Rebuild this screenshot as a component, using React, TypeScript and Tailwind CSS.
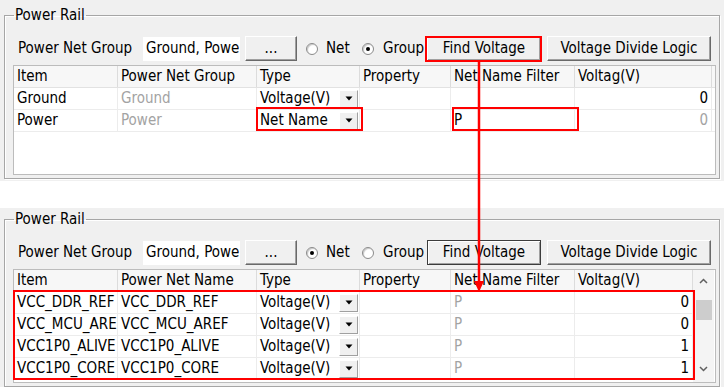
import React from 'react';

type Cell = { text?: string; gray?: boolean; dropdown?: boolean; right?: boolean };

const topHeaders = ['Item', 'Power Net Group', 'Type', 'Property', 'Net Name Filter', 'Voltag(V)'];
const bottomHeaders = ['Item', 'Power Net Name', 'Type', 'Property', 'Net Name Filter', 'Voltag(V)'];

const topCols = ['w-[104px]', 'w-[139px]', 'w-[103px]', 'w-[91px]', 'w-[124px]', 'w-[137px]'];
const bottomCols = ['w-[104px]', 'w-[139px]', 'w-[103px]', 'w-[91px]', 'w-[124px]', 'w-[118px]'];

const topRows: Cell[][] = [
  [{ text: 'Ground' }, { text: 'Ground', gray: true }, { text: 'Voltage(V)', dropdown: true }, {}, {}, { text: '0', right: true }],
  [{ text: 'Power' }, { text: 'Power', gray: true }, { text: 'Net Name', dropdown: true }, {}, { text: 'P' }, { text: '0', right: true, gray: true }],
];

const netNames = [
  ['VCC_DDR_REF', '0'],
  ['VCC_MCU_AREF', '0'],
  ['VCC1P0_ALIVE', '1'],
  ['VCC1P0_CORE', '1'],
];

const bottomRows: Cell[][] = netNames.map(([name, v]) => [
  { text: name },
  { text: name },
  { text: 'Voltage(V)', dropdown: true },
  {},
  { text: 'P', gray: true },
  { text: v, right: true },
]);

const Radio = ({ checked }: { checked?: boolean }) => (
  <span className="w-[12px] h-[12px] rounded-full border border-[#8a8a8a] bg-white flex items-center justify-center shadow-[inset_1px_1px_1px_#c8c8c8]">
    {checked && <span className="w-[4px] h-[4px] rounded-full bg-black" />}
  </span>
);

const WinButton = ({ children, className, focused }: { children: React.ReactNode; className: string; focused?: boolean }) => (
  <div
    className={`h-[25px] flex items-center justify-center bg-[#f0f0f0] ${
      focused
        ? 'border border-[#3c3c3c] shadow-[inset_1px_1px_0_#ffffff,inset_-1px_-1px_0_#a0a0a0]'
        : 'border border-t-[#ffffff] border-l-[#ffffff] border-b-[#696969] border-r-[#696969] shadow-[inset_-1px_-1px_0_#a0a0a0]'
    } ${className}`}
  >
    {children}
  </div>
);

const DropButton = () => (
  <div className="w-[19px] h-[18px] mr-[1px] bg-[#f0f0f0] border border-t-[#ffffff] border-l-[#ffffff] border-b-[#a0a0a0] border-r-[#a0a0a0] flex items-center justify-center">
    <svg width="8" height="5" viewBox="0 0 8 5">
      <path d="M0.5 0.5 L7.5 0.5 L4 4.5 Z" fill="#000" />
    </svg>
  </div>
);

const Row = ({ cells, cols }: { cells: Cell[]; cols: string[] }) => (
  <div className="flex h-[22px] border-b border-[#ececec]">
    {cells.map((c, i) => (
      <div
        key={i}
        className={`${cols[i]} shrink-0 h-full flex items-center overflow-hidden whitespace-nowrap border-r border-[#ececec] ${
          c.right ? 'justify-end pr-[3px]' : c.dropdown ? 'justify-between pl-[3px]' : 'pl-[3px]'
        } ${c.gray ? 'text-[#a3a3a3]' : 'text-black'}`}
      >
        <span>{c.text}</span>
        {c.dropdown && <DropButton />}
      </div>
    ))}
  </div>
);

const Header = ({ names, cols }: { names: string[]; cols: string[] }) => (
  <div className="flex h-[22px] bg-[#f7f7f7] border-b border-[#e2e2e2]">
    {names.map((n, i) => (
      <div key={i} className={`${cols[i]} shrink-0 h-full flex items-center pl-[3px] border-r border-[#dcdcdc] whitespace-nowrap overflow-hidden`}>
        {n}
      </div>
    ))}
  </div>
);

const Panel = ({ bottom }: { bottom?: boolean }) => (
  <div className={`bg-[#f0f0f0] px-[4px] overflow-hidden ${bottom ? 'h-[179px] pt-[3px]' : 'h-[181px] pt-[7px]'}`}>
    <fieldset className="border border-[#a6a6a6] shadow-[inset_1px_1px_0_#ffffff,1px_1px_0_#ffffff] px-0 pb-[3px] min-w-0">
      <legend className="ml-[9px] px-[1px] leading-[16px]">Power Rail</legend>
      <div className="pl-[8px] pr-[3px] mt-[13px]">
        {/* controls row */}
        <div className="flex items-center h-[25px]">
          <div className="w-[130px] pl-[5px] whitespace-nowrap">Power Net Group</div>
          <div className="w-[97px] h-[24px] bg-white pl-[3px] flex items-center overflow-hidden whitespace-nowrap">Ground, Power</div>
          <WinButton className="w-[52px] ml-[5px]">...</WinButton>
          <div className="w-[65px] pl-[9px] flex items-center gap-[8px]">
            <Radio checked={bottom} />
            <span>Net</span>
          </div>
          <div className="w-[65px] flex items-center gap-[9px]">
            <Radio checked={!bottom} />
            <span>Group</span>
          </div>
          <WinButton className="w-[114px]" focused={bottom}>Find Voltage</WinButton>
          <WinButton className="w-[164px] ml-[6px]">Voltage Divide Logic</WinButton>
        </div>

        {/* grid */}
        {bottom ? (
          <div className="mt-[4px] h-[114px] bg-white border border-[#bcbcbc] flex overflow-hidden">
            <div className="w-[679px] shrink-0">
              <Header names={bottomHeaders} cols={bottomCols} />
              {bottomRows.map((r, i) => (
                <Row key={i} cells={r} cols={bottomCols} />
              ))}
            </div>
            <div className="w-[21px] bg-[#f4f4f4] flex flex-col items-center">
              <div className="h-[22px] flex items-center justify-center">
                <svg width="9" height="6" viewBox="0 0 9 6">
                  <path d="M1 5 L4.5 1.5 L8 5" stroke="#606060" strokeWidth="1.5" fill="none" />
                </svg>
              </div>
              <div className="w-[16px] h-[20px] mt-[8px] bg-[#cdcdcd]" />
              <div className="mt-[44px] h-[10px] flex items-center justify-center">
                <svg width="9" height="6" viewBox="0 0 9 6">
                  <path d="M1 1 L4.5 4.5 L8 1" stroke="#606060" strokeWidth="1.5" fill="none" />
                </svg>
              </div>
            </div>
          </div>
        ) : (
          <div className="mt-[4px] h-[110px] bg-white border border-[#bcbcbc] overflow-hidden">
            <Header names={topHeaders} cols={topCols} />
            {topRows.map((r, i) => (
              <Row key={i} cells={r} cols={topCols} />
            ))}
          </div>
        )}
      </div>
    </fieldset>
  </div>
);

export default function App() {
  return (
    <div className="relative w-[724px] h-[387px] overflow-hidden bg-white text-[15px] text-black font-['DejaVu_Sans_Condensed','DejaVu_Sans',sans-serif]">
      <Panel />
      <div className="h-[27px] bg-white" />
      <Panel bottom />

      {/* red annotations */}
      <div className="absolute left-[425px] top-[36px] w-[117px] h-[26px] border-2 border-[#ff0000]" />
      <div className="absolute left-[256px] top-[107px] w-[107px] h-[24px] border-2 border-[#ff0000]" />
      <div className="absolute left-[452px] top-[107px] w-[127px] h-[24px] border-2 border-[#ff0000]" />
      <div className="absolute left-[13px] top-[290px] w-[682px] h-[90px] border-2 border-[#ff0000]" />
      <svg className="absolute left-0 top-0 pointer-events-none" width="724" height="387">
        <line x1="479" y1="62" x2="479" y2="283" stroke="#ff0000" strokeWidth="2.5" />
        <path d="M474 281 L484 281 L479 292 Z" fill="#ff0000" />
      </svg>
    </div>
  );
}
